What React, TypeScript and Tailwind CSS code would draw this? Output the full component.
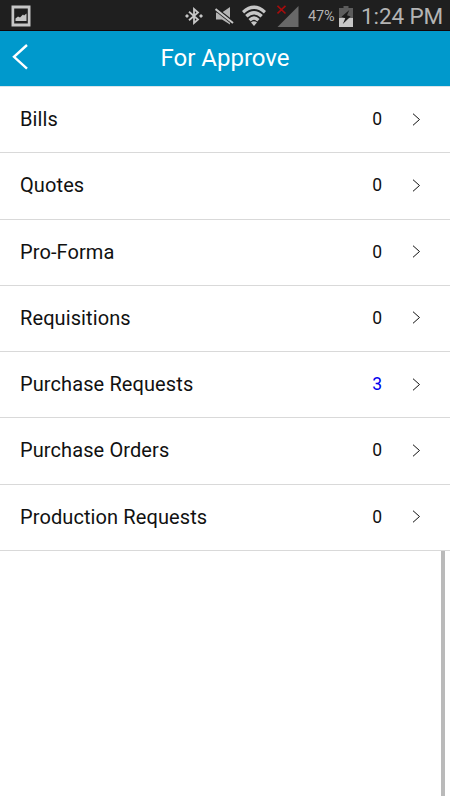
import * as React from "react"

const data = {
    items: [
        { title: "Bills", count: 0 },
        { title: "Quotes", count: 0 },
        { title: "Pro-Forma", count: 0 },
        { title: "Requisitions", count: 0 },
        { title: "Purchase Requests", count: 3 },
        { title: "Purchase Orders", count: 0 },
        { title: "Production Requests", count: 0 },
    ],
}

function PictureIcon() {
    return (
        <svg width="20" height="22" viewBox="0 0 20 22" className="shrink-0">
            <path fill="#c6c6c6" fillRule="evenodd" d="M0.5 0.5H19.5V21.5H0.5ZM3.2 3.5V18.5H16.8V3.5Z" />
            <path fill="#c6c6c6" d="M4.5 16V13.5L7 11.5L9 12.5L12 9.5L13 10.5L15.5 8.5V16Z" />
        </svg>
    )
}

function BluetoothIcon() {
    return (
        <svg width="18" height="18" viewBox="0 0 18 18" className="shrink-0">
            <path fill="none" stroke="#c6c6c6" strokeWidth="1.8" d="M4 4.8L13 12.5L9 16V2L13 5.5L4 13.2" />
            <path fill="#c6c6c6" d="M0 9L2 7L4 9L2 11ZM14 9L16 7L18 9L16 11Z" />
        </svg>
    )
}

function MutedIcon() {
    return (
        <svg width="19" height="18" viewBox="0 0 19 18" className="shrink-0">
            <path fill="#b4b4b4" d="M1 5.5H7L15 0V17.5L7 12.5H1Z" />
            <path stroke="#1f1f1f" strokeWidth="4" d="M0 1.5L19 16.5" />
            <path stroke="#c6c6c6" strokeWidth="2" d="M0.5 2L18 16" />
        </svg>
    )
}

function WifiIcon() {
    return (
        <svg width="24" height="22" viewBox="0 0 24 22" className="shrink-0">
            <g fill="none" stroke="#c6c6c6" strokeWidth="3.3">
                <path d="M1 7.2Q12 -2.8 23 7.2" />
                <path d="M4.3 11.2Q12 4.2 19.7 11.2" />
                <path d="M7.6 15.2Q12 11 16.4 15.2" />
            </g>
            <path fill="#c6c6c6" d="M9 17.5Q12 15 15 17.5L12 21Z" />
        </svg>
    )
}

function SignalIcon() {
    return (
        <svg width="22" height="22" viewBox="0 0 22 22" className="shrink-0">
            <path fill="#686868" d="M21.5 1V22H0.5Z" />
            <path stroke="#a60c0c" strokeWidth="1.6" d="M0.5 0.8L8.5 8.5M8.5 0.8L0.5 8.5" />
        </svg>
    )
}

function BatteryIcon() {
    return (
        <svg width="14" height="21" viewBox="0 0 14 21" className="shrink-0">
            <path fill="#5c5c5c" d="M4.5 0H9.5V2H14V12H0V2H4.5Z" />
            <path fill="#c6c6c6" d="M0 12H14V21H0Z" />
            <path fill="#1a1a1a" d="M10.3 4L2.5 10.8L6.3 12.2L3.8 18L11.6 10.4L8 9.2Z" />
        </svg>
    )
}

function StatusBar() {
    return (
        <div className="flex h-[31px] shrink-0 items-center border-b border-[#120508] bg-[#1f1f1f] pt-[2px] pr-[7px] pl-[11px] text-[#b4b4b4]">
            <PictureIcon />
            <div className="ml-auto flex items-center">
                <BluetoothIcon />
                <div className="ml-[12px] flex"><MutedIcon /></div>
                <div className="ml-[8px] flex"><WifiIcon /></div>
                <div className="ml-[11px] flex"><SignalIcon /></div>
                <span className="ml-[9px] w-[27px] pt-[2px] text-[14.5px] leading-none tracking-[-0.2px] whitespace-nowrap">47%</span>
                <div className="ml-[4px] flex"><BatteryIcon /></div>
                <span className="ml-[8px] w-[82px] text-[22.5px] leading-none tracking-[-0.1px] whitespace-nowrap">1:24 PM</span>
            </div>
        </div>
    )
}

function Header() {
    return (
        <header className="grid h-[55px] shrink-0 grid-cols-[1fr_auto_1fr] items-center bg-[#0099cc] text-white">
            <svg width="16" height="26" viewBox="0 0 16 26" className="mb-[3px] ml-[12px]">
                <path fill="none" stroke="currentColor" strokeWidth="2.4" d="M15 1L2 12.8L15 24.6" />
            </svg>
            <h1 className="mb-[2px] text-2xl">For Approve</h1>
        </header>
    )
}

function ApproveRow({ title, count }: { title: string; count: number }) {
    return (
        <li className="flex h-[66.25px] items-center border-b border-[#d9d9d9] pr-[29px] pb-px pl-5">
            <span className="flex-1 text-xl tracking-[0.1px]">{title}</span>
            <span className={count > 0 ? "text-[17.5px] text-[#0000ee]" : "text-[17.5px]"}>{count}</span>
            <svg width="9" height="13" viewBox="0 0 9 13" className="ml-[30px]">
                <path fill="none" stroke="currentColor" strokeWidth="1" d="M1 0.7L7.5 6.5L1 12.3" />
            </svg>
        </li>
    )
}

export default function App() {
    return (
        <div className="flex h-[800px] w-[450px] flex-col overflow-hidden bg-white font-['Roboto',sans-serif] text-[#111]">
            <StatusBar />
            <Header />
            <main className="flex flex-1 flex-col">
                <ul className="border-t border-[#d9e5ea]">
                    {data.items.map((item) => (
                        <ApproveRow key={item.title} title={item.title} count={item.count} />
                    ))}
                </ul>
                <div className="mr-[5px] mb-1 w-1 flex-1 self-end bg-[#bababa]" />
            </main>
        </div>
    )
}
